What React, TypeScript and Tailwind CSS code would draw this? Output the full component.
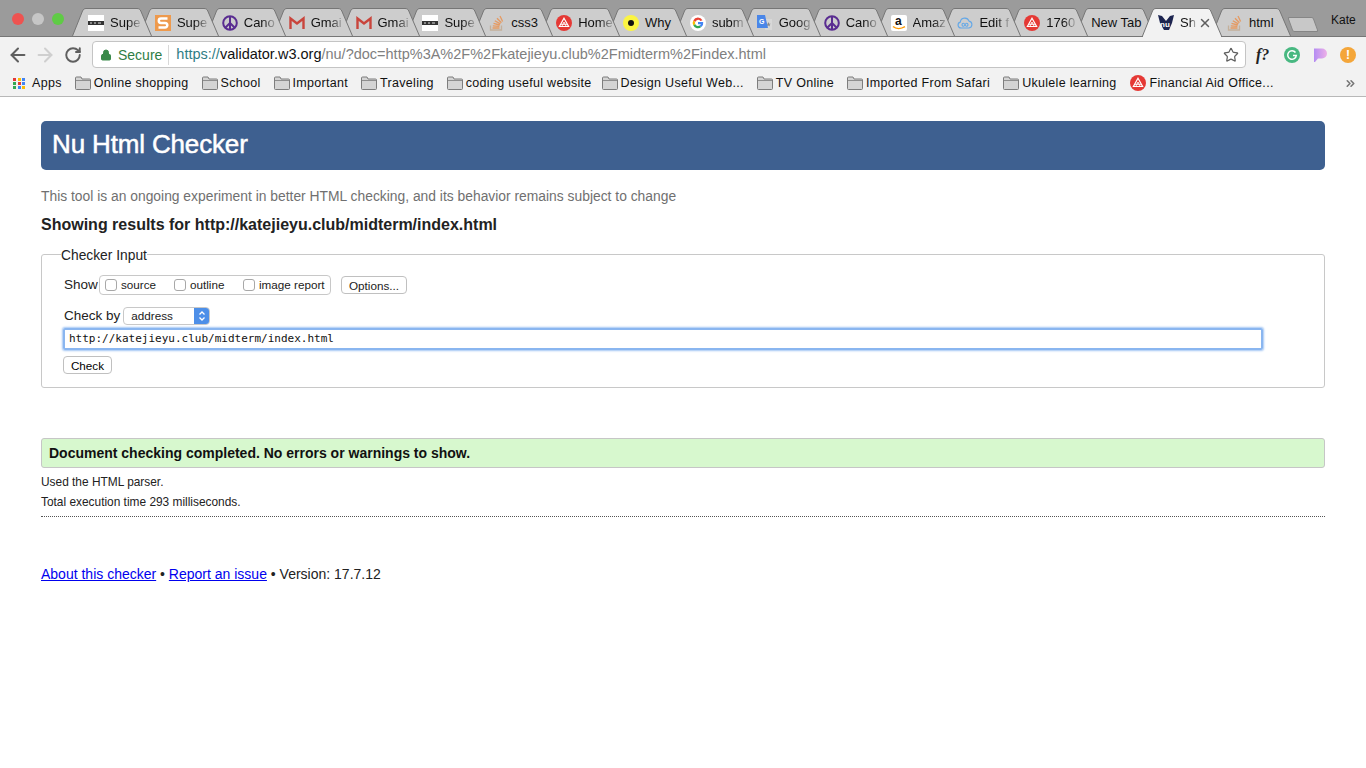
import React from "react";
import { ArrowLeft, ArrowRight, RotateCw, Lock, Star, X, ChevronsRight } from "lucide-react";

const sans = "font-['Liberation_Sans',Arial,sans-serif]";

const Peace = () => (
    <svg width="16" height="16" viewBox="0 0 16 16" fill="none" stroke="#5a2d91" strokeWidth="2">
        <circle cx="8" cy="8" r="6.8" />
        <path d="M8 1v14M8 8l-5 5M8 8l5 5" />
    </svg>
);

const Gmail = () => (
    <svg width="16" height="16" viewBox="0 0 16 16" fill="none">
        <path d="M1.500 14V3.500l6.500 5 6.500-5V14" stroke="#c9453c" strokeWidth="2.400" />
    </svg>
);

const Super = () => (
    <svg width="16" height="16" viewBox="0 0 16 16">
        <rect width="16" height="16" fill="#fff" />
        <rect x="0" y="6" width="16" height="4" fill="#333" />
        <path d="M2 8h2M6 8h2M10 8h3" stroke="#ddd" strokeWidth="1" />
    </svg>
);

const Sublime = () => (
    <svg width="16" height="16" viewBox="0 0 16 16">
        <rect width="16" height="16" fill="#ee9a4d" />
        <path d="M12.500 3.500H6a2.200 2.200 0 0 0 0 4.400h4a2.200 2.200 0 0 1 0 4.600H3.500" fill="none" stroke="#fff" strokeWidth="2.500" />
    </svg>
);

const Stack = () => (
    <svg width="16" height="16" viewBox="0 0 16 16" fill="none" stroke="#e59a62" strokeWidth="1.300">
        <path d="M1.500 10.500v4.500h11v-4.500" stroke="#c4b09a" />
        <path d="M3.500 13h7M3.800 10.800l6.600.6M4.500 8.300l6.300 1.700M5.800 5.700l5.600 3.200M8 3.200l4.400 4.600M11 1l2.600 5.600" />
    </svg>
);

const Triangle = ({ size = 16 }: { size?: number }) => (
    <svg width={size} height={size} viewBox="0 0 16 16">
        <circle cx="8" cy="8" r="8" fill="#e53935" />
        <path d="M8 3.200 12.600 11.500H3.400Z" fill="none" stroke="#fff" strokeWidth="1.200" />
        <path d="M5 9.300h6M6 11l2-4 2 4" fill="none" stroke="#fff" strokeWidth="0.900" />
    </svg>
);

const Dot = () => (
    <svg width="16" height="16" viewBox="0 0 16 16">
        <circle cx="8" cy="8" r="8" fill="#fbf442" />
        <circle cx="8" cy="8" r="3" fill="#111" />
    </svg>
);

const Google = () => (
    <svg width="16" height="16" viewBox="0 0 16 16">
        <circle cx="8" cy="8" r="8" fill="#fff" />
        <path d="M12.500 5.300A5.200 5.200 0 0 0 3.300 5.500L5.200 7a3 3 0 0 1 5.200-1z" fill="#ea4335" />
        <path d="M3.300 5.500a5.200 5.200 0 0 0 0 5L5.200 9a3 3 0 0 1 0-2z" fill="#fbbc05" />
        <path d="M3.300 10.500a5.200 5.200 0 0 0 8 1.500l-1.700-1.400A3 3 0 0 1 5.200 9z" fill="#34a853" />
        <path d="M13.200 7H8v2.200h2.900a2.600 2.600 0 0 1-1.300 1.400l1.700 1.400A5.200 5.200 0 0 0 13.200 7z" fill="#4285f4" />
    </svg>
);

const Translate = () => (
    <svg width="16" height="16" viewBox="0 0 16 16">
        <path d="M7 4h8v11H8z" fill="#d8d8d8" />
        <path d="M11.500 7l.7 1.800h1.600l-1.300 1 .5 1.800-1.500-1-1.500 1 .5-1.800-1.300-1h1.600z" fill="#8a8a8a" />
        <path d="M0 0h8l3 13H0z" fill="#4a86e8" />
        <text x="2" y="9" fontSize="7" fontWeight="700" fill="#fff" fontFamily="Liberation Sans">G</text>
    </svg>
);

const Amazon = () => (
    <svg width="16" height="16" viewBox="0 0 16 16">
        <rect width="16" height="16" rx="2" fill="#fff" />
        <text x="4" y="10" fontSize="12" fontWeight="700" fill="#111" fontFamily="Liberation Sans">a</text>
        <path d="M2 11.500c3 2.500 8 2.500 12 .2" fill="none" stroke="#f90" strokeWidth="1.500" />
    </svg>
);

const Cloud = () => (
    <svg width="16" height="16" viewBox="0 0 16 16" fill="none" stroke="#64a8e8" strokeWidth="1.100">
        <path d="M4 13a3 3 0 0 1-.7-5.900 4.500 4.500 0 0 1 8.700-1A3.500 3.500 0 0 1 12 13z" />
        <path d="M6.500 8.300a1.500 1.500 0 1 0 0 3c1.500 0 1.500-3 3-3a1.500 1.500 0 1 1 0 3c-1.500 0-1.500-3-3-3z" />
    </svg>
);

const Nu = () => (
    <svg width="16" height="16" viewBox="0 0 16 16">
        <path d="M0 0l4 1 4 5 4-5 4-1-2 8-3 7H6L2 8z" fill="#1d2550" />
        <text x="2" y="12" fontSize="8" fontWeight="700" fill="#fff" fontFamily="Liberation Sans">nu</text>
    </svg>
);

const Blank = () => null;

type TabItem = { title: string; icon: React.FC; active?: boolean; noIcon?: boolean; fade?: boolean };

const tabs: TabItem[] = [
    { title: "Supe", icon: Super, fade: true },
    { title: "Supe", icon: Sublime, fade: true },
    { title: "Cano", icon: Peace, fade: true },
    { title: "Gmai", icon: Gmail, fade: true },
    { title: "Gmai", icon: Gmail, fade: true },
    { title: "Supe", icon: Super, fade: true },
    { title: "css3", icon: Stack },
    { title: "Home", icon: Triangle, fade: true },
    { title: "Why", icon: Dot },
    { title: "subm", icon: Google, fade: true },
    { title: "Goog", icon: Translate, fade: true },
    { title: "Cano", icon: Peace, fade: true },
    { title: "Amaz", icon: Amazon, fade: true },
    { title: "Edit f", icon: Cloud, fade: true },
    { title: "1760", icon: Triangle, fade: true },
    { title: "New Tab", icon: Blank, noIcon: true },
    { title: "Sh", icon: Nu, active: true, fade: true },
    { title: "html", icon: Stack },
];

const Tab: React.FC<{ tab: TabItem; index: number }> = ({ tab, index }) => {
    const Icon = tab.icon;
    return (
        <div
            className={`relative w-[80px] h-[28px] shrink-0 ${tab.active ? "-mr-[11px]" : "-mr-[13.14px]"}`}
            style={{ zIndex: tab.active ? 50 : 30 - index }}
        >
            <svg className="absolute inset-0" width="80" height="28" viewBox="0 0 80 28">
                <path
                    d="M0.500 28L10.500 3C11.300 1.200 12.500 0.500 14 0.500H65C66.800 0.500 68 1.200 68.800 3L79.500 28"
                    fill={tab.active ? "#f2f2f2" : "#cdcdcd"}
                    stroke="#767676"
                    strokeWidth="1"
                />
            </svg>
            {tab.active && <span className="absolute left-[1px] right-[1px] -bottom-[1px] h-[1px] bg-[#f2f2f2]" />}
            <div className={`relative h-full flex items-center pt-[1px] pl-[16px] text-[13px] text-[#111] ${sans}`}>
                {!tab.noIcon && (
                    <span className="w-[16px] h-[16px] mr-[6px] shrink-0 flex"><Icon /></span>
                )}
                <span className={`whitespace-nowrap ${tab.fade ? "[mask-image:linear-gradient(90deg,#000_60%,#0003)]" : ""}`}>
                    {tab.title}
                </span>
                {tab.active && <X size={14} strokeWidth={2.500} className="ml-[2px] text-[#5f5f5f] shrink-0" />}
            </div>
        </div>
    );
};

const bookmarks = [
    "Online shopping",
    "School",
    "Important",
    "Traveling",
    "coding useful website",
    "Design Useful Web...",
    "TV Online",
    "Imported From Safari",
    "Ukulele learning",
];

const FolderIcon = () => (
    <svg width="16" height="14" viewBox="0 0 16 14" className="shrink-0">
        <path d="M0.500 12.500V2A1 1 0 0 1 1.500 1H6L7 3H14.500A1 1 0 0 1 15.500 4V12.500A1 1 0 0 1 14.500 13.500H1.500A1 1 0 0 1 0.500 12.500Z" fill="#d4d4d4" stroke="#7d7d7d" />
        <path d="M1 4.500H15" stroke="#8e8e8e" />
    </svg>
);

const Bookmark: React.FC<{ label: string }> = ({ label }) => (
    <div className={`flex items-center gap-[3px] ${label === "coding useful website" ? "pr-[10px]" : "pr-[13px]"}`}>
        <FolderIcon />
        <span>{label}</span>
    </div>
);

const Browser = () => (
    <div className={sans}>
        <div className="h-[37px] bg-[#9b9b9b] flex border-b border-[#767676]">
            <div className="flex items-start gap-[8px] pl-[12px] pt-[13px] w-[72px] shrink-0 h-[36px]">
                <span className="w-[12px] h-[12px] rounded-full bg-[#ee5350]" />
                <span className="w-[12px] h-[12px] rounded-full bg-[#c6c6c6]" />
                <span className="w-[12px] h-[12px] rounded-full bg-[#5fcb45]" />
            </div>
            <div className="flex pt-[8px] h-[36px] w-[1218px] shrink-0">
                {tabs.map((t, i) => (
                    <Tab key={i} tab={t} index={i} />
                ))}
                <div className="ml-[12px] mt-[9px] w-[26px] h-[15px] bg-[#c8c8c8] border border-[#868686] rounded-[2px] [transform:skewX(20deg)] shrink-0" />
            </div>
            <div className="flex-1 text-[12px] text-[#111] pl-[41px] pt-[11px] whitespace-nowrap">Kate</div>
        </div>
        <div className="h-[33px] bg-[#f2f2f2] flex items-center pt-[2px]">
            <div className="flex items-center w-[92px] shrink-0 pl-[7px] gap-[5px]">
                <ArrowLeft size={22} strokeWidth={2.200} className="text-[#5f5f5f]" />
                <ArrowRight size={22} strokeWidth={2.200} className="text-[#cfcfcf]" />
                <RotateCw size={18} strokeWidth={2.600} className="text-[#5f5f5f] ml-[3px]" />
            </div>
            <div className="w-[1154px] h-[27px] bg-white border border-[#c4c4c4] rounded-[4px] flex items-center text-[14px]">
                <Lock size={12} fill="#3a8a4a" strokeWidth={2} className="text-[#3a8a4a] ml-[7px]" />
                <span className="text-[#2f7d45] ml-[6px] pr-[6px] border-r border-[#d8d8d8] h-[20px] leading-[20px]">Secure</span>
                <div className="ml-[7px] flex-1 whitespace-nowrap text-[14.5px]">
                    <span className="text-[#2f7d85]">https://</span>
                    <span className="text-[#111]">validator.w3.org</span>
                    <span className="text-[#808080]">/nu/?doc=http%3A%2F%2Fkatejieyu.club%2Fmidterm%2Findex.html</span>
                </div>
                <Star size={16} strokeWidth={1.800} className="text-[#5f5f5f] mr-[6px]" />
            </div>
            <div className="flex-1 flex items-center pl-[10px] gap-[12px]">
                <span className="font-['Liberation_Serif',serif] italic font-bold text-[16px] text-[#222] w-[16px] whitespace-nowrap">f?</span>
                <svg width="16" height="16" viewBox="0 0 16 16">
                    <circle cx="8" cy="8" r="8" fill="#48b881" />
                    <path d="M11.500 5.500A4.300 4.300 0 1 0 12.300 8.500H9" fill="none" stroke="#fff" strokeWidth="1.500" />
                </svg>
                <svg width="16" height="16" viewBox="0 0 16 16">
                    <defs>
                        <linearGradient id="peek" x1="0" y1="0" x2="1" y2="0">
                            <stop offset="0" stopColor="#b48cf2" />
                            <stop offset="1" stopColor="#eeb0e8" />
                        </linearGradient>
                    </defs>
                    <path d="M2 1.500h8a5 5 0 0 1 0 10H6l-3 3.500H2z" fill="url(#peek)" />
                </svg>
                <span className="w-[16px] h-[16px] rounded-full bg-[#f4a63a] text-white text-[12px] font-bold flex items-center justify-center">!</span>
            </div>
        </div>
        <div className="h-[27px] bg-[#f2f2f2] border-b border-[#b8b8b8] flex items-center pl-[13px] text-[12.5px] text-[#111] tracking-[0.3px]">
            <div className="flex items-center gap-[6px] pr-[13px]">
                <span className="grid grid-cols-3 gap-[1px] w-[13px]">
                    <i className="w-[3px] h-[3px] bg-[#e53935]" />
                    <i className="w-[3px] h-[3px] bg-[#fbbc05]" />
                    <i className="w-[3px] h-[3px] bg-[#4285f4]" />
                    <i className="w-[3px] h-[3px] bg-[#34a853]" />
                    <i className="w-[3px] h-[3px] bg-[#e53935]" />
                    <i className="w-[3px] h-[3px] bg-[#4285f4]" />
                    <i className="w-[3px] h-[3px] bg-[#34a853]" />
                    <i className="w-[3px] h-[3px] bg-[#4285f4]" />
                    <i className="w-[3px] h-[3px] bg-[#fbbc05]" />
                </span>
                <span>Apps</span>
            </div>
            {bookmarks.map((b) => (
                <Bookmark key={b} label={b} />
            ))}
            <div className="flex items-center gap-[4px]">
                <Triangle size={16} />
                <span>Financial Aid Office...</span>
            </div>
            <ChevronsRight size={13} strokeWidth={3} className="ml-auto mr-[9px] text-[#777]" />
        </div>
    </div>
);

const Page = () => (
    <main className={`bg-white flex-1 px-[41px] pt-[24px] ${sans}`}>
        <h1 className="h-[49px] bg-[#3e6090] rounded-[5px] text-white text-[26px] tracking-[-0.15px] leading-[46px] pl-[11px] [-webkit-text-stroke:0.5px_#fff]">Nu Html Checker</h1>
        <p className="mt-[17px] text-[13.85px] leading-[18px] text-[#707070]">This tool is an ongoing experiment in better HTML checking, and its behavior remains subject to change</p>
        <h2 className="mt-[10px] text-[16px] leading-[20px] font-bold text-[#222]">Showing results for http://katejieyu.club/midterm/index.html</h2>
        <fieldset className="mt-[12px] h-[141px] border border-[#c8c8c8] rounded-[3px] pl-[21px] pr-[61px]">
            <legend className="-ml-[2px] translate-y-[1px] text-[13.8px] leading-[15px] text-[#222]">Checker Input</legend>
            <div className="flex items-center mt-[13px] h-[20px] text-[13.5px] text-[#222]">
                <span className="ml-[1px] w-[32px]">Show</span>
                <div className="ml-[3px] h-[20px] w-[232px] border border-[#c8c8c8] rounded-[4px] flex items-center text-[11.7px] pl-[5px]">
                    <i className="w-[12px] h-[12px] border border-[#a8a8a8] rounded-[3px] bg-white" />
                    <span className="ml-[4px] w-[41px]">source</span>
                    <i className="ml-[12px] w-[12px] h-[12px] border border-[#a8a8a8] rounded-[3px] bg-white" />
                    <span className="ml-[4px] w-[41px]">outline</span>
                    <i className="ml-[12px] w-[12px] h-[12px] border border-[#a8a8a8] rounded-[3px] bg-white" />
                    <span className="ml-[4px] whitespace-nowrap">image report</span>
                </div>
                <button className="ml-[10px] h-[18px] w-[66px] border border-[#c0c0c0] rounded-[4px] text-[11.7px] bg-white">Options...</button>
            </div>
            <div className="flex items-center mt-[11px] h-[20px] text-[13.5px] text-[#222]">
                <span className="ml-[1px]">Check by</span>
                <div className="ml-[3px] w-[87px] h-[18px] border border-[#c8c8c8] rounded-[4px] flex items-center text-[11.7px] pl-[7px] justify-between overflow-hidden">
                    <span>address</span>
                    <span className="w-[15px] h-[18px] bg-[#4d8fe8] flex flex-col items-center justify-center text-white">
                        <svg width="8" height="12" viewBox="0 0 8 12" fill="none" stroke="#fff" strokeWidth="1.300">
                            <path d="M1.500 4.500 4 2l2.500 2.500M1.500 7.500 4 10l2.500-2.500" />
                        </svg>
                    </span>
                </div>
            </div>
            <div className="mt-[2px] h-[22px] w-[1200px] border-2 border-[#8ab6f0] rounded-[2px] shadow-[0_0_2px_1px_#a3c6f4] flex items-center pl-[4px] text-[11px] text-[#111] font-['DejaVu_Sans_Mono',monospace]">
                http://katejieyu.club/midterm/index.html
            </div>
            <button className={`mt-[6px] block h-[18px] w-[49px] border border-[#c0c0c0] rounded-[4px] text-[11.7px] bg-white ${sans}`}>Check</button>
        </fieldset>
        <div className="mt-[50px] h-[30px] bg-[#d7f8ce] border border-[#c6c6c6] rounded-[3px] pl-[7px] text-[14px] leading-[28px] font-bold text-[#111]">Document checking completed. No errors or warnings to show.</div>
        <p className="mt-[7px] text-[11.9px] leading-[14px] text-[#222]">Used the HTML parser.</p>
        <p className="mt-[6px] text-[11.9px] leading-[14px] text-[#222]">Total execution time 293 milliseconds.</p>
        <div className="mt-[7px] border-t border-dotted border-[#555]" />
        <p className="mt-[49px] text-[14px] leading-[16px] text-[#222]">
            <a className="text-[#0000ee] underline" href="#">About this checker</a> • <a className="text-[#0000ee] underline" href="#">Report an issue</a> • Version: 17.7.12
        </p>
    </main>
);

const App: React.FC = () => {
    return (
        <div className="w-[1366px] h-[768px] flex flex-col overflow-hidden bg-white">
            <Browser />
            <Page />
        </div>
    );
};

export default App;
